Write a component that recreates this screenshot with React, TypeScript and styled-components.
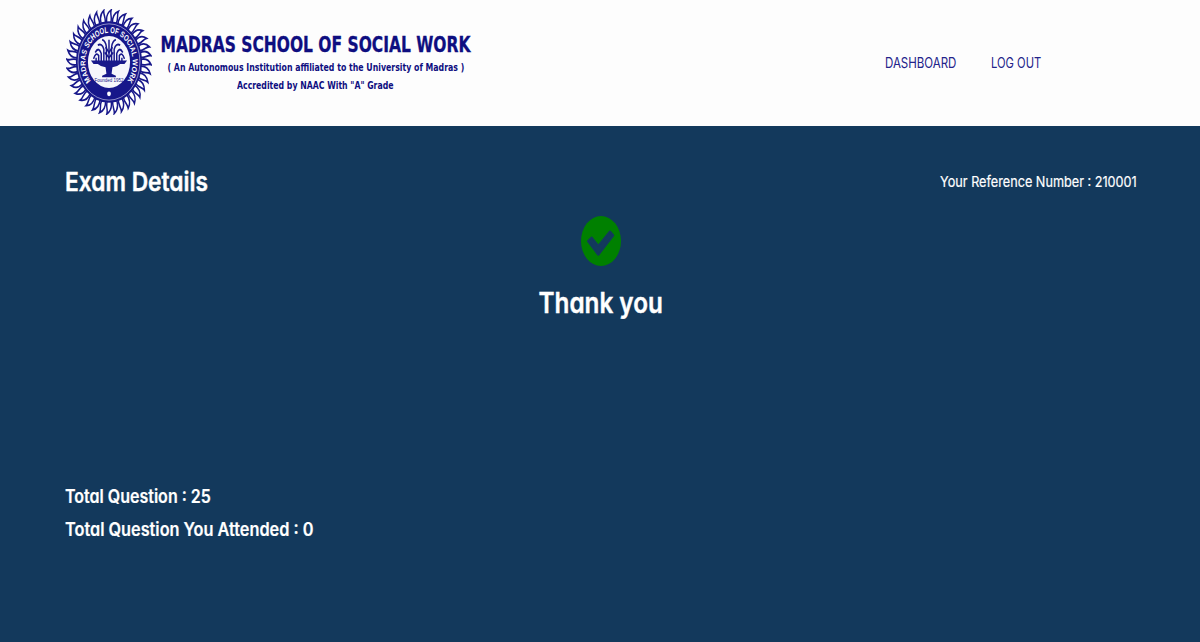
import React from 'react';
import styled, { createGlobalStyle } from 'styled-components';

const Global = createGlobalStyle`
  * { box-sizing: border-box; }
  body {
    margin: 0;
    background: #13395c;
    font-family: Inter, 'Open Sans', sans-serif;
    font-feature-settings: 'cv11' 1;
  }
`;
const Page = styled.div`
  height: 642px;
  display: flex;
  flex-direction: column;
  background: #13395c;
  color: #fff;
`;
const Header = styled.header`
  height: 126px;
  background: #fdfdfd;
  display: flex;
  justify-content: space-between;
  padding: 9px 159px 0 66px;
`;
const Brand = styled.div`
  display: flex;
  gap: 8px;
`;
const Seal = styled.svg`
  width: 86px;
  height: 106px;
  display: block;
`;
const BrandText = styled.div`
  width: 311px;
  display: flex;
  flex-direction: column;
  align-items: center;
  color: #0e0e80;
  font-family: 'DejaVu Sans Condensed', 'DejaVu Sans', sans-serif;
  padding-top: 22px;
`;
/* Text set in a narrowed width, as all lettering on this page is. */
const Narrow = styled.span<{
  $size: number;
  $line: number;
  $x: number;
  $weight?: number;
  $origin?: string;
  $stroke?: number;
}>`
  display: block;
  margin: 0;
  white-space: nowrap;
  font-size: ${(p) => p.$size}px;
  line-height: ${(p) => p.$line}px;
  font-weight: ${(p) => p.$weight ?? 400};
  -webkit-text-stroke: ${(p) => p.$stroke ?? 0}px currentColor;
  transform: scaleX(${(p) => p.$x});
  transform-origin: ${(p) => p.$origin ?? 'center'};
`;
const Nav = styled.nav`
  display: flex;
  justify-content: space-between;
  width: 156px;
  padding-top: 44px;
  color: #23238a;
`;
const NavItem = styled.a<{ $w: number }>`
  width: ${(p) => p.$w}px;
`;
const Main = styled.main`
  flex: 1;
  display: flex;
  flex-direction: column;
  padding: 36px 63px 0 65px;
`;
const TitleRow = styled.div`
  display: flex;
  justify-content: space-between;
  align-items: center;
  height: 40px;
`;
const Result = styled.section`
  display: flex;
  flex-direction: column;
  align-items: center;
  padding-top: 14px;
  height: 278px;
`;
const Check = styled.svg`
  width: 41px;
  height: 50px;
  display: block;
  margin-bottom: 17px;
`;

const teeth = Array.from({ length: 36 }, (_, i) => i * 10);

export default function App() {
  return (
    <Page>
      <Global />
      <Header>
        <Brand>
          <Seal viewBox="0 0 100 100" preserveAspectRatio="none">
            <defs>
              <path id="ring" d="M28.900 67.700 A27.500 27.500 0 1 1 71.100 67.700" />
            </defs>
            {teeth.map((a) => (
              <path key={a} transform={`rotate(${a} 50 50)`} d="M47.500 13 C46.500 8 48 3.500 52.500 1 C51 5 54 8 52 13" fill="#fff" stroke="#17178a" strokeWidth="1.700" />
            ))}
            <circle cx="50" cy="50" r="38.500" fill="#17178a" />
            <circle cx="50" cy="50" r="36" fill="none" stroke="#c4c4e6" strokeWidth=".7" />
            <circle cx="50" cy="50" r="24.500" fill="#f6f6fb" />
            <text fontFamily="Liberation Sans" fontWeight="700" fontSize="8.200" fill="#fff">
              <textPath href="#ring" textLength="124" lengthAdjust="spacingAndGlyphs">MADRAS SCHOOL OF SOCIAL WORK</textPath>
            </text>
            <circle cx="50" cy="80" r="2.200" fill="#fff" />
            <g fill="none" stroke="#17178a" strokeWidth="1.700">
              <path d="M50 49V29M47 49V36Q46 30 42 29M53 49V36Q54 30 58 29M44 49V38Q42 32 37 34M56 49V38Q58 32 63 34M41 49V42Q38 35 34 41M59 49V42Q62 35 66 41M38 49V44Q35 40 32 47M62 49V44Q65 40 68 47M35 49V46M65 49V46" />
              <path d="M46 36L50 41L54 36M45 41L50 46L55 41" />
            </g>
            <path d="M29 48.500H71L68 52H63Q60 54.500 54 55L53 61L58 63V64.300H42V63L47 61L46 55Q40 54.500 37 52H32Z" fill="#17178a" />
            <text x="50" y="69" textAnchor="middle" fontFamily="Liberation Sans" fontSize="5.200" fill="#17178a">Founded 1952</text>
          </Seal>
          <BrandText>
            <Narrow $size={21.5} $line={28} $x={0.801} $weight={700} $stroke={0.3}>MADRAS SCHOOL OF SOCIAL WORK</Narrow>
            <Narrow $size={11.3} $line={17} $x={0.769} $weight={700}>( An Autonomous Institution affiliated to the University of Madras )</Narrow>
            <Narrow $size={11.3} $line={19} $x={0.765} $weight={700}>Accredited by NAAC With "A" Grade</Narrow>
          </BrandText>
        </Brand>
        <Nav>
          <NavItem $w={71}><Narrow $size={14} $line={20} $x={0.822} $origin="left">DASHBOARD</Narrow></NavItem>
          <NavItem $w={50}><Narrow $size={14} $line={20} $x={0.8} $origin="left">LOG OUT</Narrow></NavItem>
        </Nav>
      </Header>
      <Main>
        <TitleRow>
          <Narrow as="h1" $size={26} $line={40} $x={0.875} $weight={600} $stroke={0.4} $origin="left">Exam Details</Narrow>
          <Narrow $size={15} $line={24} $x={0.845} $stroke={0.2} $origin="right">Your Reference Number : 210001</Narrow>
        </TitleRow>
        <Result>
          <Check viewBox="0 0 41 50">
            <ellipse cx="20" cy="25" rx="20" ry="25" fill="#008000" />
            <path d="M7 25.200L10.700 21.500L17.300 29.800L29 15.500L32.300 19.500L17.300 38.800Z" fill="#13395c" stroke="#13395c" strokeWidth="2" strokeLinejoin="round" />
          </Check>
          <Narrow $size={28} $line={40} $x={0.867} $weight={600} $stroke={0.4}>Thank you</Narrow>
        </Result>
        <Narrow $size={18.5} $line={33} $x={0.866} $weight={600} $stroke={0.2} $origin="left">Total Question : 25</Narrow>
        <Narrow $size={18.5} $line={33} $x={0.88} $weight={600} $stroke={0.2} $origin="left">Total Question You Attended : 0</Narrow>
      </Main>
    </Page>
  );
}
